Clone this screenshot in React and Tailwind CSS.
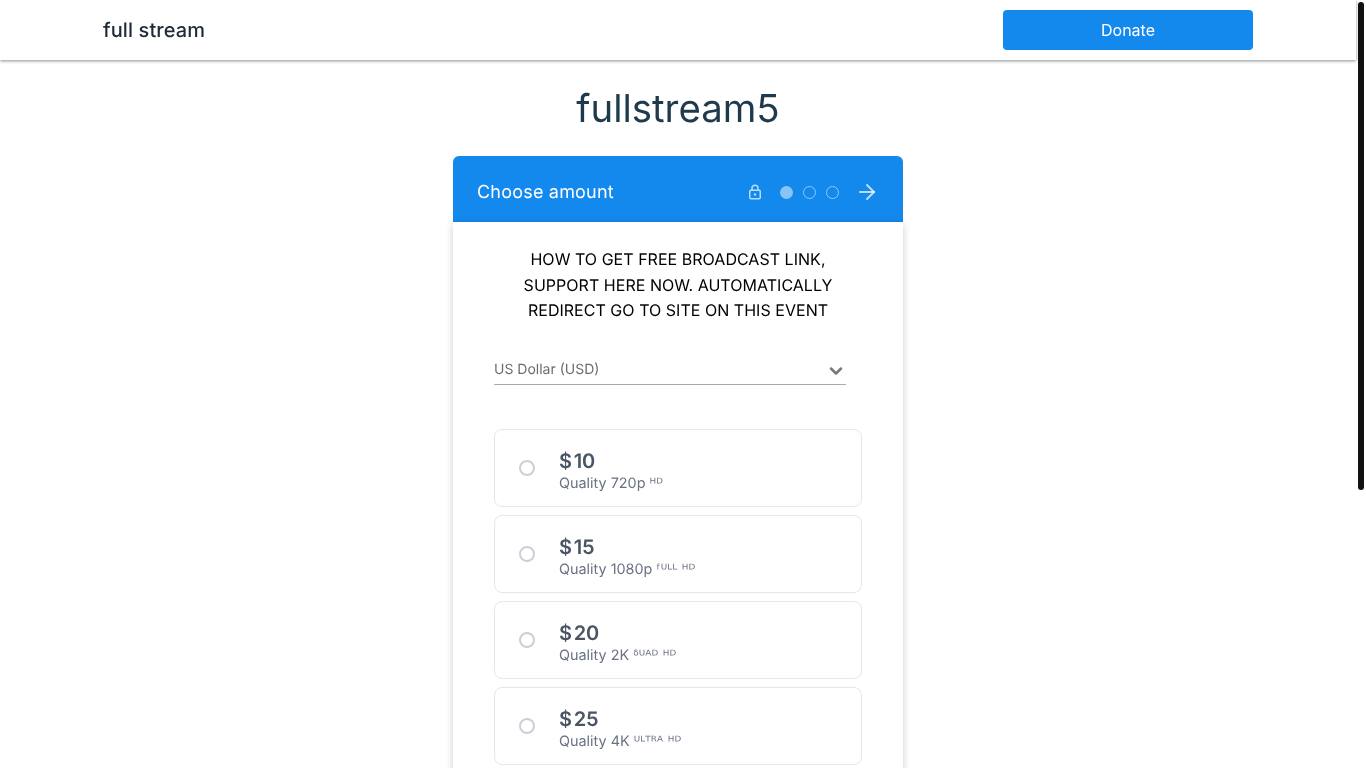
import React from "react";
import { ArrowRight, ChevronDown } from "lucide-react";

const options = [
  { amount: "10", label: "Quality 720p", tag: "ᴴᴰ" },
  { amount: "15", label: "Quality 1080p", tag: "ᶠᵁᴸᴸ ᴴᴰ" },
  { amount: "20", label: "Quality 2K", tag: "ᵟᵁᴬᴰ ᴴᴰ" },
  { amount: "25", label: "Quality 4K", tag: "ᵁᴸᵀᴿᴬ ᴴᴰ" },
];

const Option = ({ amount, label, tag }) => (
  <div className="flex h-[78px] items-center rounded-lg border border-gray-200 bg-white pl-6">
    <span className="h-4 w-4 rounded-full border-2 border-[#cbd0d8]"></span>
    <div className="ml-6 pt-[7px]">
      <div className="flex gap-[2px] text-xl leading-6 font-semibold tracking-[-0.2px] text-gray-600">
        <span>$</span>
        <span>{amount}</span>
      </div>
      <div className="mt-[1px] text-[14.4px] leading-5 font-normal text-gray-500">
        {label}{" "}
        <span className="font-['DejaVu_Sans',sans-serif] text-[14px] tracking-[0.1px]">{tag}</span>
      </div>
    </div>
  </div>
);

const App = () => {
  return (
    <div className="relative font-['Inter',sans-serif] [text-rendering:geometricPrecision]">
      {/* Scrollbar thumb */}
      <div className="fixed top-[2px] right-[2px] h-[488px] w-[6px] rounded-full bg-[#111111]"></div>

      <div className="w-[1356px] [will-change:opacity]">
        {/* Top bar */}
        <header className="h-[60px] bg-white shadow-[0_1px_3px_rgba(0,0,0,0.45)]">
          <div className="mx-auto flex h-full w-[1150px] items-center justify-between">
            <span className="text-xl font-medium tracking-[0.1px] text-gray-800">full stream</span>
            <button className="h-10 w-[250px] rounded bg-[#1389ee] text-base text-white">
              Donate
            </button>
          </div>
        </header>

        <main className="pb-[440px]">
          <h1 className="mt-[21px] text-center text-[38.4px] leading-14 font-normal text-[#1f3a4d]">
            fullstream5
          </h1>

          <div className="mx-auto mt-[19px] w-[450px]">
            <div className="flex h-[66px] items-center justify-between rounded-t-md bg-[#1389ee] px-6 pt-[6px] text-white">
              <span className="pt-[1px] text-lg tracking-[0.2px]">Choose amount</span>
              <div className="flex items-center">
                <svg
                  className="h-4 w-4 text-white/70"
                  viewBox="0 0 16 16"
                  fill="none"
                  stroke="currentColor"
                  strokeWidth="1.5"
                >
                  <rect x="2.75" y="6.25" width="10.5" height="8.5" rx="1.2" />
                  <path d="M5 6V4.2a3 3 0 0 1 6 0V6" />
                  <circle cx="8" cy="10.5" r="1.2" fill="currentColor" stroke="none" />
                </svg>
                <span className="ml-[17px] h-[13px] w-[13px] rounded-full bg-white/50"></span>
                <span className="ml-[10px] h-[13px] w-[13px] rounded-full border-[1.5px] border-white/50"></span>
                <span className="ml-[10px] h-[13px] w-[13px] rounded-full border-[1.5px] border-white/50"></span>
                <ArrowRight className="ml-[16px] h-6 w-6 text-white/70" strokeWidth={2} />
              </div>
            </div>

            <div className="bg-white px-[41px] pt-[25px] pb-10 shadow-[0_2px_8px_rgba(0,0,0,0.2)]">
              <p className="mx-auto w-[330px] text-center text-base leading-[25.6px] tracking-[0.03px] text-black">
                HOW TO GET FREE BROADCAST LINK, SUPPORT HERE NOW. AUTOMATICALLY REDIRECT GO TO SITE ON THIS EVENT
              </p>

              <div className="mt-[29px] flex h-[32px] w-[352px] items-center justify-between border-b border-[#aaaaaa] pt-[4px] text-sm text-[#6b6b6b]">
                <span>US Dollar (USD)</span>
                <ChevronDown className="-mb-[1px] h-5 w-5 text-[#777777]" strokeWidth={3} />
              </div>

              <div className="mt-11 flex flex-col gap-2">
                {options.map((o) => (
                  <Option key={o.amount} {...o} />
                ))}
              </div>
            </div>
          </div>
        </main>
      </div>
    </div>
  );
};

export default App;
